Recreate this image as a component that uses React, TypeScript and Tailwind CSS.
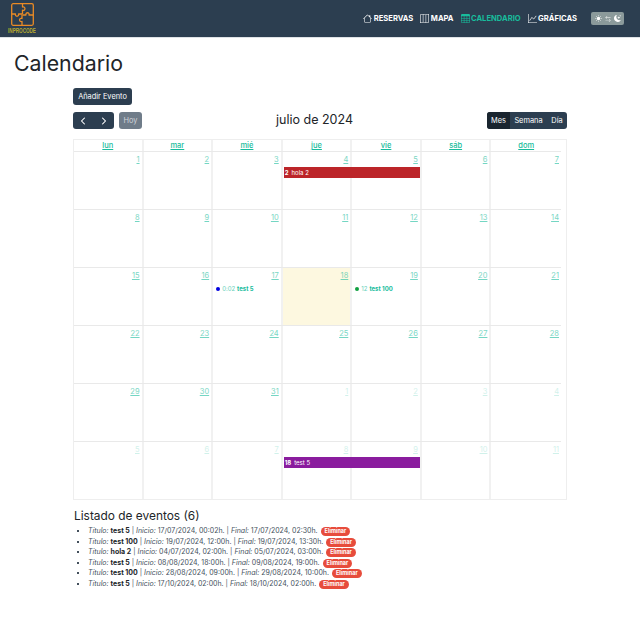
import { BsChevronLeft, BsChevronRight, BsGraphUp, BsHouse, BsMap, BsTable, BsSunFill, BsArrowLeftRight, BsMoonStarsFill } from "react-icons/bs";

const dayNames = ["lun", "mar", "mié", "jue", "vie", "sáb", "dom"];

type Day = { n: number; muted?: boolean; today?: boolean };

const weeks: Day[][] = [
  [1, 2, 3, 4, 5, 6, 7].map((n) => ({ n })),
  [8, 9, 10, 11, 12, 13, 14].map((n) => ({ n })),
  [15, 16, 17, 18, 19, 20, 21].map((n) => ({ n, today: n === 18 })),
  [22, 23, 24, 25, 26, 27, 28].map((n) => ({ n })),
  [
    { n: 29 },
    { n: 30 },
    { n: 31 },
    { n: 1, muted: true },
    { n: 2, muted: true },
    { n: 3, muted: true },
    { n: 4, muted: true },
  ],
  [5, 6, 7, 8, 9, 10, 11].map((n) => ({ n, muted: true })),
];

const listado = [
  { titulo: "test 5", inicio: "17/07/2024, 00:02h.", final: "17/07/2024, 02:30h." },
  { titulo: "test 100", inicio: "19/07/2024, 12:00h.", final: "19/07/2024, 13:30h." },
  { titulo: "hola 2", inicio: "04/07/2024, 02:00h.", final: "05/07/2024, 03:00h." },
  { titulo: "test 5", inicio: "08/08/2024, 18:00h.", final: "09/08/2024, 19:00h." },
  { titulo: "test 100", inicio: "28/08/2024, 09:00h.", final: "29/08/2024, 10:00h." },
  { titulo: "test 5", inicio: "17/10/2024, 02:00h.", final: "18/10/2024, 02:00h." },
];

function Logo() {
  return (
    <div className="flex w-[24px] flex-col items-center">
      <svg width="23" height="23" viewBox="0 0 23 23" fill="none" stroke="#e98a25" strokeWidth="1.3" strokeLinejoin="round">
        <rect x="0.7" y="0.7" width="21.6" height="21.6" rx="1.5" />
        <path d="M11.5 .7V4C14.5 3 15 8 11.5 7.2V11" />
        <path d="M22.3 12H18C19 9 14 9 15 12H11.5" />
        <path d="M11 22.3V18.5C8 19.5 7.5 14.5 11 15.5V11.5" />
        <path d="M.7 11H4.5C3.5 14 8.5 14 7.5 11H11.5" />
      </svg>
      <span className="mt-[1px] scale-y-[1.4] text-[4.6px] leading-[7px] font-bold whitespace-nowrap text-[#b5a92f] font-['Liberation_Sans',sans-serif]">
        INPROCODE
      </span>
    </div>
  );
}

function NavLink({ icon, label, active }: { icon: React.ReactNode; label: string; active?: boolean }) {
  return (
    <span className={`flex items-center gap-[1.5px] text-[7.6px] font-bold ${active ? "text-[#18bc9c]" : "text-white"}`}>
      {icon}
      {label}
    </span>
  );
}

function WeekRow({ days, children }: { days: Day[]; children?: React.ReactNode }) {
  return (
    <div className="grid h-[58px] grid-cols-7 grid-rows-[15px_11px_1fr] border-t border-[#e9e9e9]">
      {days.map((day, i) => (
        <div
          key={i}
          style={{ gridColumnStart: i + 1 }}
          className={`row-span-3 row-start-1 pt-[3px] pr-[2px] text-right ${i < 6 ? "border-r-2 border-[#f1f1f1]" : ""} ${
            day.today ? "bg-[#fdf8e0]" : ""
          }`}
        >
          <a className={`block text-[7.5px] leading-[10px] text-[#18bc9c] underline ${day.muted ? "opacity-20" : "opacity-60"}`}>{day.n}</a>
        </div>
      ))}
      {children}
    </div>
  );
}

function BarEvent({ bg, hour, title }: { bg: string; hour: string; title: string }) {
  return (
    <div className={`z-10 col-span-2 col-start-4 row-start-2 mr-[2px] ml-[1px] flex items-center px-[1px] text-[6px] text-white ${bg}`}>
      <b className="mr-[3px]">{hour}</b>
      {title}
    </div>
  );
}

function DotEvent({ col, dot, hour, title }: { col: string; dot: string; hour: string; title: string }) {
  return (
    <div className={`z-10 row-start-2 ml-[3px] flex items-center text-[6px] whitespace-nowrap text-[#18bc9c] ${col}`}>
      <span className={`mr-[2px] h-[4px] w-[4px] rounded-full ${dot}`} />
      <span className="mr-[2px] opacity-70">{hour}</span>
      <b>{title}</b>
    </div>
  );
}

export default function App() {
  return (
    <div className="min-h-[619px] bg-white text-[#212529] font-['Inter',sans-serif]">
      <nav className="flex h-[38px] items-center border-b border-[#dee2e6] bg-[#2c3e50] pr-[16px] pl-[10px]">
        <Logo />
        <div className="ml-auto flex items-center gap-[7px]">
          <NavLink icon={<BsHouse size={9} />} label="RESERVAS" />
          <NavLink icon={<BsMap size={9} />} label="MAPA" />
          <NavLink icon={<BsTable size={9} />} label="CALENDARIO" active />
          <NavLink icon={<BsGraphUp size={9} />} label="GRÁFICAS" />
          <div className="ml-[7px] flex h-[13px] w-[33px] items-center justify-center gap-[3px] rounded-[2px] bg-[#8b9a9b] text-white">
            <BsSunFill size={7} />
            <BsArrowLeftRight size={6} />
            <BsMoonStarsFill size={7} />
          </div>
        </div>
      </nav>

      <h1 className="mt-[12px] ml-[14px] text-[21.3px] leading-[26px] font-normal">Calendario</h1>

      <div className="mt-[12px] ml-[73px] w-[494px]">
        <button className="block h-[17px] w-[59px] rounded-[3px] bg-[#2c3e50] text-[7.4px] text-white">Añadir Evento</button>

        <div className="mt-[7px] flex h-[17px] items-center justify-between">
          <div className="flex w-[69px] gap-[5px]">
            <div className="flex h-[17px] w-[41px] items-center justify-around rounded-[3px] bg-[#2c3e50] text-white">
              <BsChevronLeft size={8} strokeWidth={1} />
              <BsChevronRight size={8} strokeWidth={1} />
            </div>
            <button className="h-[17px] w-[23px] rounded-[3px] bg-[#6f7c89] text-[7.4px] text-[#cfd4d9]">Hoy</button>
          </div>
          <h2 className="text-[12.5px] font-normal whitespace-nowrap">julio de 2024</h2>
          <div className="flex h-[17px] w-[80px] overflow-hidden rounded-[3px] bg-[#2c3e50] text-[7.4px] text-white">
            <span className="flex w-[23px] items-center justify-center bg-[#1a252f]">Mes</span>
            <span className="flex w-[37px] items-center justify-center">Semana</span>
            <span className="flex w-[20px] items-center justify-center">Día</span>
          </div>
        </div>

        <div className="mt-[10px] border border-[#eeeeee] pr-[5px]">
          <div className="grid h-[11px] grid-cols-7">
            {dayNames.map((name, i) => (
              <a
                key={name}
                className={`text-center text-[7.5px] leading-[11px] font-medium text-[#18bc9c] underline ${i < 6 ? "border-r-2 border-[#f1f1f1]" : ""}`}
              >
                {name}
              </a>
            ))}
          </div>
          <WeekRow days={weeks[0]}>
            <BarEvent bg="bg-[#bc2529]" hour="2" title="hola 2" />
          </WeekRow>
          <WeekRow days={weeks[1]} />
          <WeekRow days={weeks[2]}>
            <DotEvent col="col-start-3" dot="bg-[#0000e0]" hour="0:02" title="test 5" />
            <DotEvent col="col-start-5" dot="bg-[#10a040]" hour="12" title="test 100" />
          </WeekRow>
          <WeekRow days={weeks[3]} />
          <WeekRow days={weeks[4]} />
          <WeekRow days={weeks[5]}>
            <BarEvent bg="bg-[#8a1c9e]" hour="18" title="test 5" />
          </WeekRow>
        </div>

        <h3 className="mt-[9px] ml-[1px] text-[11.9px] leading-[14px] font-normal">Listado de eventos (6)</h3>
        <ul className="mt-[3px] list-[square] pl-[15px] text-[7px] leading-[10.6px] text-[#44505c]">
          {listado.map((item, i) => (
            <li key={i} className="whitespace-nowrap">
              <i>Título:</i> <b className="text-[#212529]">{item.titulo}</b> | <i>Inicio:</i> {item.inicio} | <i>Final:</i> {item.final}{" "}
              <span className="ml-[1px] inline-block rounded-full bg-[#e74c3c] px-[4px] text-[5.5px] leading-[9px] font-bold text-white">Eliminar</span>
            </li>
          ))}
        </ul>
      </div>
    </div>
  );
}
